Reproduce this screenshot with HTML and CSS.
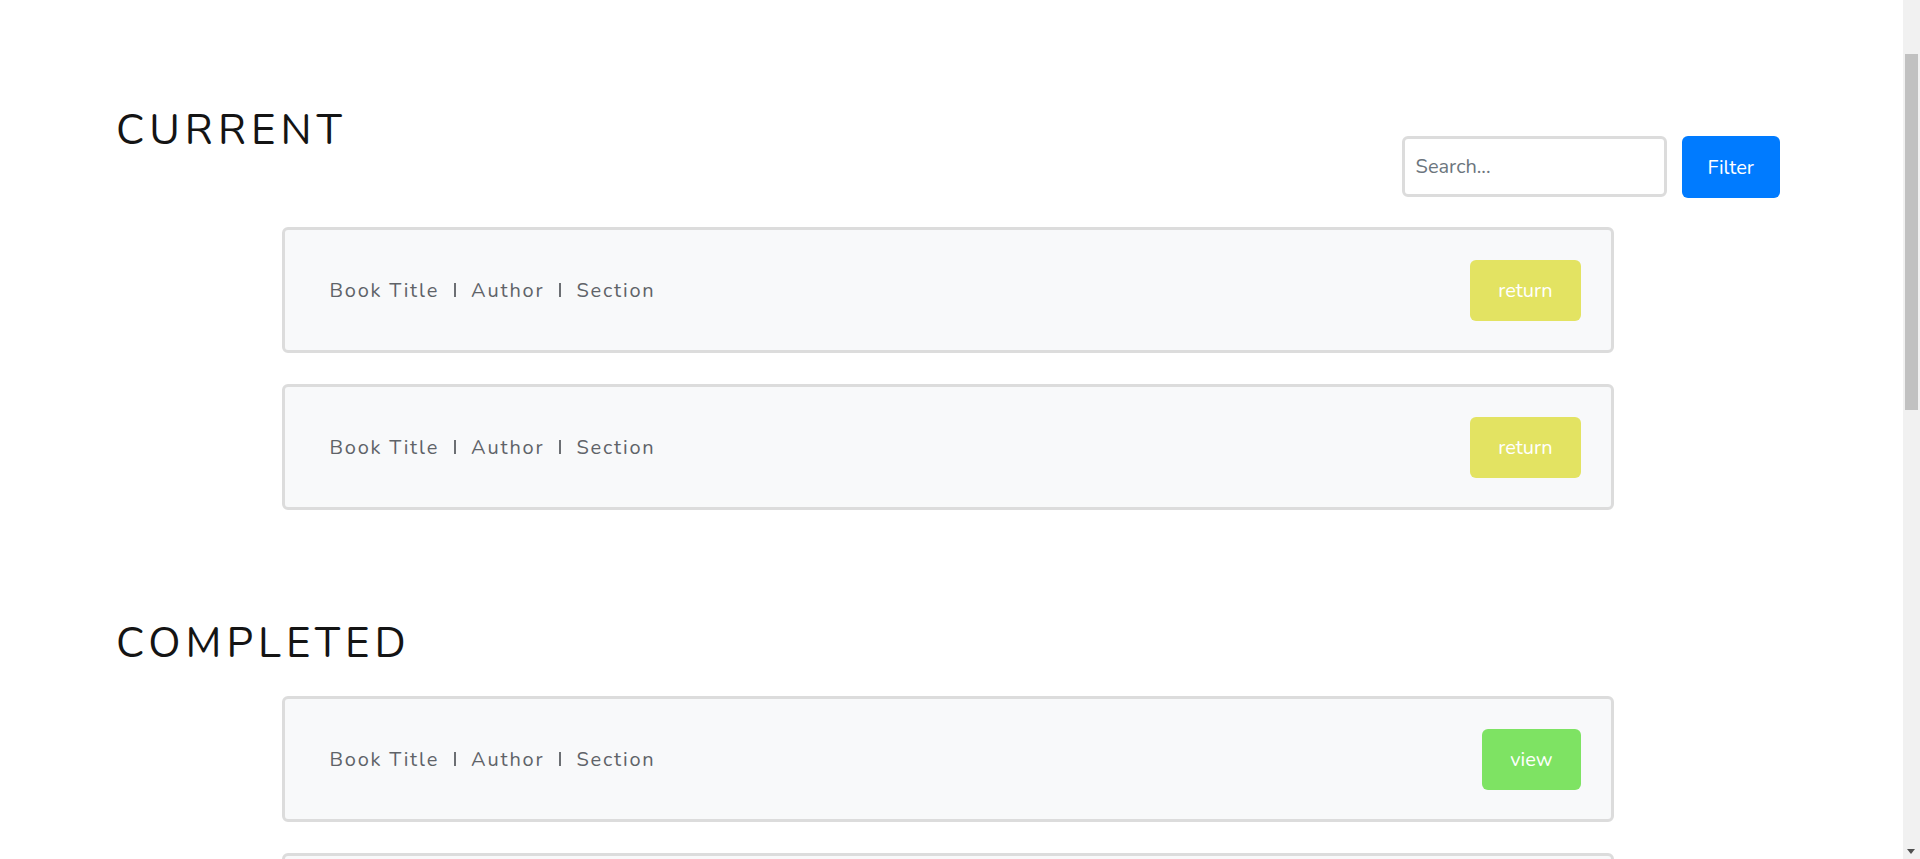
FILE: index.html
```html
<!DOCTYPE html>
<html lang="en">
<head>
<meta charset="utf-8">
<title>Books</title>
<link rel="stylesheet" href="styles.css">
</head>
<body>
<main class="page">
  <section class="section">
    <div class="section-head">
      <h1 class="section-title">CURRENT</h1>
      <form class="search-form">
        <input class="search-input" type="text" placeholder="Search...">
        <button class="btn btn-filter" type="button">Filter</button>
      </form>
    </div>
    <div class="cards">
      <div class="card">
        <span class="card-text">Book Title<span class="sep"></span>Author<span class="sep"></span>Section</span>
        <button class="btn btn-return" type="button">return</button>
      </div>
      <div class="card">
        <span class="card-text">Book Title<span class="sep"></span>Author<span class="sep"></span>Section</span>
        <button class="btn btn-return" type="button">return</button>
      </div>
    </div>
  </section>
  <section class="section section-completed">
    <div class="section-head">
      <h1 class="section-title">COMPLETED</h1>
    </div>
    <div class="cards">
      <div class="card">
        <span class="card-text">Book Title<span class="sep"></span>Author<span class="sep"></span>Section</span>
        <button class="btn btn-view" type="button">view</button>
      </div>
      <div class="card">
        <span class="card-text">Book Title<span class="sep"></span>Author<span class="sep"></span>Section</span>
        <button class="btn btn-view" type="button">view</button>
      </div>
    </div>
  </section>
</main>
<div class="scrollbar" aria-hidden="true">
  <div class="scrollbar-thumb"></div>
  <div class="scrollbar-arrow"></div>
</div>
</body>
</html>
```

FILE: styles.css
```css
* {
  box-sizing: border-box;
}

html, body {
  margin: 0;
  padding: 0;
  background: #ffffff;
}

body {
  font-family: "Nunito", "Lato", "Open Sans", sans-serif;
  color: #212529;
}

.page {
  padding: 106px 140px 120px 116px;
}

.section-completed {
  margin-top: 109px;
}

.section-head {
  display: flex;
  justify-content: space-between;
  align-items: flex-start;
}

.section-title {
  margin: 0;
  font-size: 42px;
  line-height: 50px;
  font-weight: 400;
  letter-spacing: 5px;
  color: #141414;
}

.search-form {
  display: flex;
  gap: 15px;
  margin-top: 30px;
}

.search-input {
  width: 265px;
  height: 61px;
  border: 3px solid #dcdcdc;
  border-radius: 6px;
  padding: 0 11px;
  font-family: inherit;
  font-size: 20px;
  color: #495057;
  outline: none;
}

.search-input::placeholder {
  color: #6c757d;
}

.btn {
  border: none;
  border-radius: 6px;
  font-family: inherit;
  font-size: 20px;
  color: #ffffff;
  cursor: pointer;
  padding: 0 28px;
  height: 61px;
}

.btn-filter {
  background: #007bff;
  height: 62px;
  padding: 0 26px;
}

.btn-return {
  background: #e3e362;
}

.btn-view {
  background: #7ee363;
}

.cards {
  width: 80%;
  margin: 29px auto 0;
  display: flex;
  flex-direction: column;
  gap: 31px;
}

.section-completed .cards {
  margin-top: 27px;
}

.card {
  display: flex;
  align-items: center;
  justify-content: space-between;
  background: #f8f9fa;
  border: 3px solid #dcdcdc;
  border-radius: 6px;
  padding: 30px 30px 29px 44px;
}

.card-text {
  display: flex;
  align-items: center;
  font-size: 20px;
  letter-spacing: 1.8px;
  color: #5f6368;
}

.sep {
  display: inline-block;
  width: 2px;
  height: 14px;
  margin: 0 15px 0 15px;
  background: #6c6f73;
  position: relative;
  top: -1px;
}

.scrollbar {
  position: fixed;
  top: 0;
  right: 0;
  width: 17px;
  height: 100vh;
  background: #f1f1f1;
}

.scrollbar-thumb {
  position: absolute;
  left: 2px;
  right: 2px;
  top: 54px;
  height: 356px;
  background: #c1c1c1;
}

.scrollbar-arrow {
  position: absolute;
  left: 4px;
  bottom: 5px;
  width: 0;
  height: 0;
  border-left: 4.5px solid transparent;
  border-right: 4.5px solid transparent;
  border-top: 5px solid #505050;
}
```
